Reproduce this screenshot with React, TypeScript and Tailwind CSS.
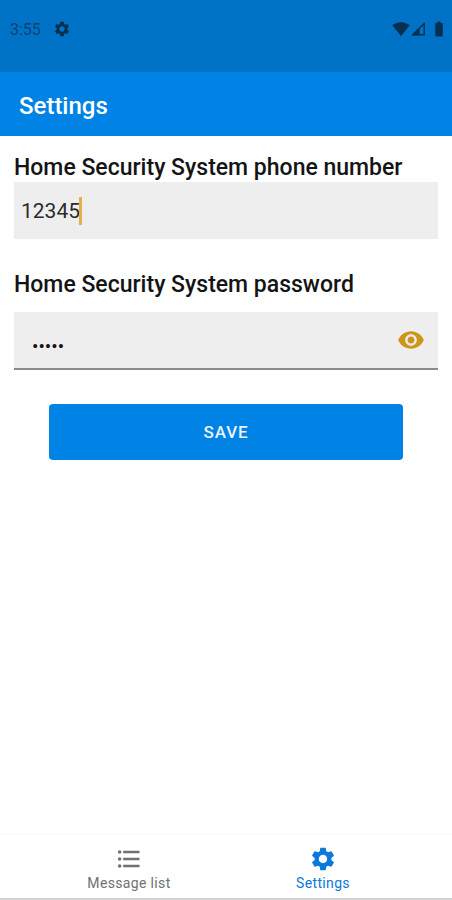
import { useState } from "react";

import {
	MdBatteryFull,
	MdFormatListBulleted,
	MdRemoveRedEye,
	MdSettings,
	MdSignalWifi4Bar,
} from "react-icons/md";

const NAV_ITEMS = [
	{ label: "Message list", href: "#messages", icon: MdFormatListBulleted },
	{ label: "Settings", href: "#settings", icon: MdSettings, isActive: true },
];

const SignalIcon = () => (
	<svg aria-hidden="true" className="size-4" viewBox="0 0 16 16">
		<path
			d="M2.6 13.8 L14.2 2.4 V13.8 Z"
			fill="none"
			stroke="currentColor"
			strokeLinejoin="round"
			strokeWidth="1.4"
		/>
		<path d="M1.8 14.4 L9.6 6.8 V14.4 Z" fill="currentColor" />
	</svg>
);

const StatusBar = () => (
	<div className="flex h-[72px] items-start justify-between bg-[#0072c6] pt-5 pr-1 pl-[10px] text-[#06304f]">
		<div className="flex h-[18px] items-center gap-3">
			<span className="pt-0.5 text-base text-[#064478]">3:55</span>
			<MdSettings size={18} />
		</div>
		<div className="flex h-[18px] items-center">
			<MdSignalWifi4Bar size={18} />
			<SignalIcon />
			<MdBatteryFull className="ml-1" size={18} />
		</div>
	</div>
);

const BottomNav = () => (
	<nav className="flex h-[66px] justify-center border-t border-b-2 border-t-[#f7f7f7] border-b-[#d2d2d2]">
		{NAV_ITEMS.map(({ label, href, icon: Icon, isActive }) => (
			<a
				aria-current={isActive ? "page" : undefined}
				className={`flex max-w-[194px] flex-1 flex-col items-center pt-[10px] text-sm tracking-wide ${
					isActive ? "text-[#0b78dc]" : "text-[#707070]"
				}`}
				href={href}
				key={label}
			>
				<Icon size={28} />
				{label}
			</a>
		))}
	</nav>
);

export default function App() {
	const [phone, setPhone] = useState("12345");
	const [password, setPassword] = useState("12345");
	const [isVisible, setIsVisible] = useState(false);

	return (
		<div className="flex min-h-screen flex-col bg-white font-[Roboto,sans-serif]">
			<StatusBar />
			<header className="flex h-16 items-center bg-[#0083e5] px-[19px] pt-1">
				<h1 className="font-medium text-2xl text-white">Settings</h1>
			</header>

			<form
				className="flex flex-1 flex-col px-[14px] pt-4"
				onSubmit={(event) => event.preventDefault()}
			>
				<label
					className="pt-0.5 font-medium text-[#141414] text-[23px] leading-7"
					htmlFor="phone"
				>
					Home Security System phone number
				</label>
				<div className="relative flex h-[57px] bg-[#eeeeee]">
					<input
						className="w-full bg-transparent px-[7px] pt-0.5 text-[#2b2b2b] text-[21px] caret-transparent outline-none"
						id="phone"
						inputMode="tel"
						onChange={(event) => setPhone(event.target.value)}
						value={phone}
					/>
					{/* Text cursor, placed after the typed digits */}
					<div className="pointer-events-none absolute inset-y-0 left-[6px] flex items-center text-[21px]">
						<span aria-hidden="true" className="invisible">
							{phone}
						</span>
						<span className="h-7 w-[3px] bg-[#e2b04e]" />
					</div>
				</div>

				<label
					className="mt-[30px] pt-0.5 font-medium text-[#141414] text-[23px] leading-7"
					htmlFor="password"
				>
					Home Security System password
				</label>
				<div className="mt-[13px] flex h-[58px] items-center border-[#8c8c8c] border-b-2 bg-[#eeeeee]">
					<input
						className="h-full min-w-0 flex-1 bg-transparent pt-3 pl-[18px] text-[#141414] text-[19px] outline-none"
						id="password"
						onChange={(event) => setPassword(event.target.value)}
						type={isVisible ? "text" : "password"}
						value={password}
					/>
					<button
						aria-label="Show password"
						className="mr-[13px] text-[#cc9618]"
						onClick={() => setIsVisible(!isVisible)}
						type="button"
					>
						<MdRemoveRedEye size={28} />
					</button>
				</div>

				<button
					className="mx-[35px] mt-[34px] h-14 rounded bg-[#0083e5] pt-0.5 font-medium text-[17px] text-[#e8f3fd] tracking-wider"
					type="submit"
				>
					SAVE
				</button>
			</form>

			<BottomNav />
		</div>
	);
}
